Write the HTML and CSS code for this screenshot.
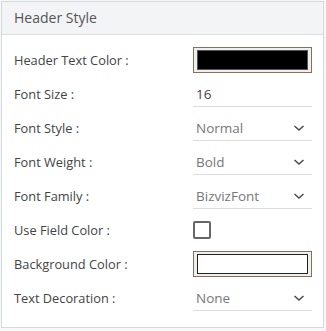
FILE: index.html
```html
<!DOCTYPE html>
<html lang="en">
<head>
  <meta charset="UTF-8">
  <title>Header Style</title>
  <link rel="stylesheet" href="styles.css">
</head>
<body>
  <div class="panel">
    <div class="panel-head">Header Style</div>

    <div class="panel-body">
      <div class="row">
        <span class="label">Header Text Color :</span>
        <div class="color-box"><div class="swatch swatch-black"></div></div>
      </div>

      <div class="row">
        <span class="label">Font Size :</span>
        <div class="field"><span class="value dark">16</span></div>
      </div>

      <div class="row">
        <span class="label">Font Style :</span>
        <div class="field">
          <span class="value">Normal</span>
          <svg class="chev" width="12" height="8" viewBox="0 0 12 8"><path d="M1.5 2 L6 6 L10.5 2" fill="none" stroke="#4a4a4a" stroke-width="1.5"/></svg>
        </div>
      </div>

      <div class="row">
        <span class="label">Font Weight :</span>
        <div class="field">
          <span class="value">Bold</span>
          <svg class="chev" width="12" height="8" viewBox="0 0 12 8"><path d="M1.5 2 L6 6 L10.5 2" fill="none" stroke="#4a4a4a" stroke-width="1.5"/></svg>
        </div>
      </div>

      <div class="row">
        <span class="label">Font Family :</span>
        <div class="field">
          <span class="value">BizvizFont</span>
          <svg class="chev" width="12" height="8" viewBox="0 0 12 8"><path d="M1.5 2 L6 6 L10.5 2" fill="none" stroke="#4a4a4a" stroke-width="1.5"/></svg>
        </div>
      </div>

      <div class="row">
        <span class="label">Use Field Color :</span>
        <div class="checkbox"></div>
      </div>

      <div class="row">
        <span class="label">Background Color :</span>
        <div class="color-box"><div class="swatch swatch-white"></div></div>
      </div>

      <div class="row">
        <span class="label">Text Decoration :</span>
        <div class="field">
          <span class="value">None</span>
          <svg class="chev" width="12" height="8" viewBox="0 0 12 8"><path d="M1.5 2 L6 6 L10.5 2" fill="none" stroke="#4a4a4a" stroke-width="1.5"/></svg>
        </div>
      </div>
    </div>
  </div>
</body>
</html>
```

FILE: styles.css
```css
body {
  margin: 0;
  padding: 1px 2px 4px 1px;
  background: #f7f8f9;
  font-family: 'Open Sans', sans-serif;
  color: #444;
}
.panel {
  background: white;
  border: 1px solid #d5d9dc;
  height: 327px;
  box-sizing: border-box;
}
.panel-head {
  background: #f3f4f5;
  border-bottom: 1px solid #dcdfe2;
  height: 32px;
  line-height: 32px;
  padding-left: 12px;
  font-size: 14px;
  color: #555;
}
.panel-body {
  padding: 8px 10px 0 12px;
}
.row {
  display: flex;
  align-items: center;
  height: 34px;
}
.label {
  width: 179px;
  font-size: 12.8px;
  color: #444;
}
.field {
  display: flex;
  align-items: center;
  justify-content: space-between;
  width: 119px;
  height: 26px;
  box-sizing: border-box;
  border-bottom: 1px solid #dddddd;
  padding: 0 7px 0 3px;
}
.value {
  font-size: 13.5px;
  color: #777;
}
.value.dark {
  color: #444;
}
.color-box {
  width: 119px;
  height: 26px;
  box-sizing: border-box;
  border: 1px solid #8c6e58;
  background: #efefef;
  padding: 2px 3px;
}
.swatch {
  height: 100%;
  box-sizing: border-box;
  border: 1px solid #555;
}
.swatch-black {
  background: #000;
}
.swatch-white {
  background: #fff;
  border-color: #222;
}
.checkbox {
  width: 18px;
  height: 18px;
  box-sizing: border-box;
  border: 2px solid #666;
  border-radius: 2px;
}
```
